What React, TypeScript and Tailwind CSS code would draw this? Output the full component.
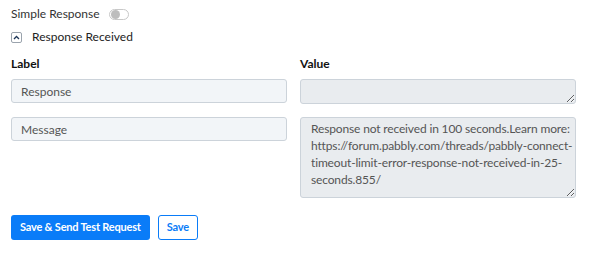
import React, { useState } from 'react';

export default function App() {
  const [simple, setSimple] = useState(false);
  const [open, setOpen] = useState(true);

  return (
    <div className="w-[591px] h-[256px] bg-white text-[#212529] pl-[11px] pr-[15px] pt-[6px] text-[12px] font-['Lato',sans-serif]">
      <div className="flex items-center h-[16px]">
        <span className="text-[12px] text-[#333]">Simple Response</span>
        <button
          onClick={() => setSimple(!simple)}
          className="ml-[9px] w-[20px] h-[11px] rounded-full border border-[#c8c8c8] bg-white flex items-center px-[1px]"
        >
          <span className="w-[9px] h-[9px] rounded-full bg-[#bdbdbd]" />
        </button>
      </div>

      <div className="flex items-center mt-[9px] h-[12px]">
        <button
          onClick={() => setOpen(!open)}
          className="w-[11px] h-[11px] border border-[#9aa3ad] rounded-[2px] flex items-center justify-center"
        >
          <svg width="7" height="5" viewBox="0 0 7 5" fill="none">
            <path d="M1 4 L3.5 1.5 L6 4" stroke="#1d3557" strokeWidth="1.3" />
          </svg>
        </button>
        <span className="ml-[10px] text-[12px] text-[#222]">Response Received</span>
      </div>

      <div className="grid grid-cols-[276px_276px] gap-x-[13px] mt-[12px]">
        <div className="text-[12px] font-bold text-[#111] h-[16px]">Label</div>
        <div className="text-[12px] font-bold text-[#111] h-[16px]">Value</div>

        <input
          readOnly
          value="Response"
          className="mt-[8px] h-[24px] rounded-[3px] border border-[#ccd3da] bg-[#f2f5f8] px-[9px] text-[12px] text-[#555] outline-none"
        />
        <textarea
          readOnly
          className="mt-[8px] h-[25px] rounded-[3px] border border-[#ccd3da] bg-[#e9ecef] px-[10px] text-[12px] outline-none overflow-hidden"
        />

        <input
          readOnly
          value="Message"
          className="mt-[13px] h-[24px] self-start rounded-[3px] border border-[#ccd3da] bg-[#f2f5f8] px-[9px] text-[12px] text-[#555] outline-none"
        />
        <textarea
          readOnly
          value="Response not received in 100 seconds.Learn more: https://forum.pabbly.com/threads/pabbly-connect-timeout-limit-error-response-not-received-in-25-seconds.855/"
          className="mt-[13px] h-[81px] w-[276px] rounded-[3px] border border-[#ccd3da] bg-[#e9ecef] pl-[10px] pr-0 pt-[2px] text-[12px] leading-[17px] tracking-[-0.15px] text-[#555] outline-none resize-y overflow-hidden"
        />
      </div>

      <div className="flex items-center gap-[8px] mt-[17px]">
        <button className="h-[25px] px-[9px] rounded-[3px] bg-[#0a7cf8] text-white text-[11px] font-bold tracking-[-0.2px]">
          Save &amp; Send Test Request
        </button>
        <button className="h-[25px] px-[8px] rounded-[3px] border border-[#0a7cf8] bg-white text-[#0a7cf8] text-[11px] font-bold tracking-[-0.2px]">
          Save
        </button>
      </div>
    </div>
  );
}
